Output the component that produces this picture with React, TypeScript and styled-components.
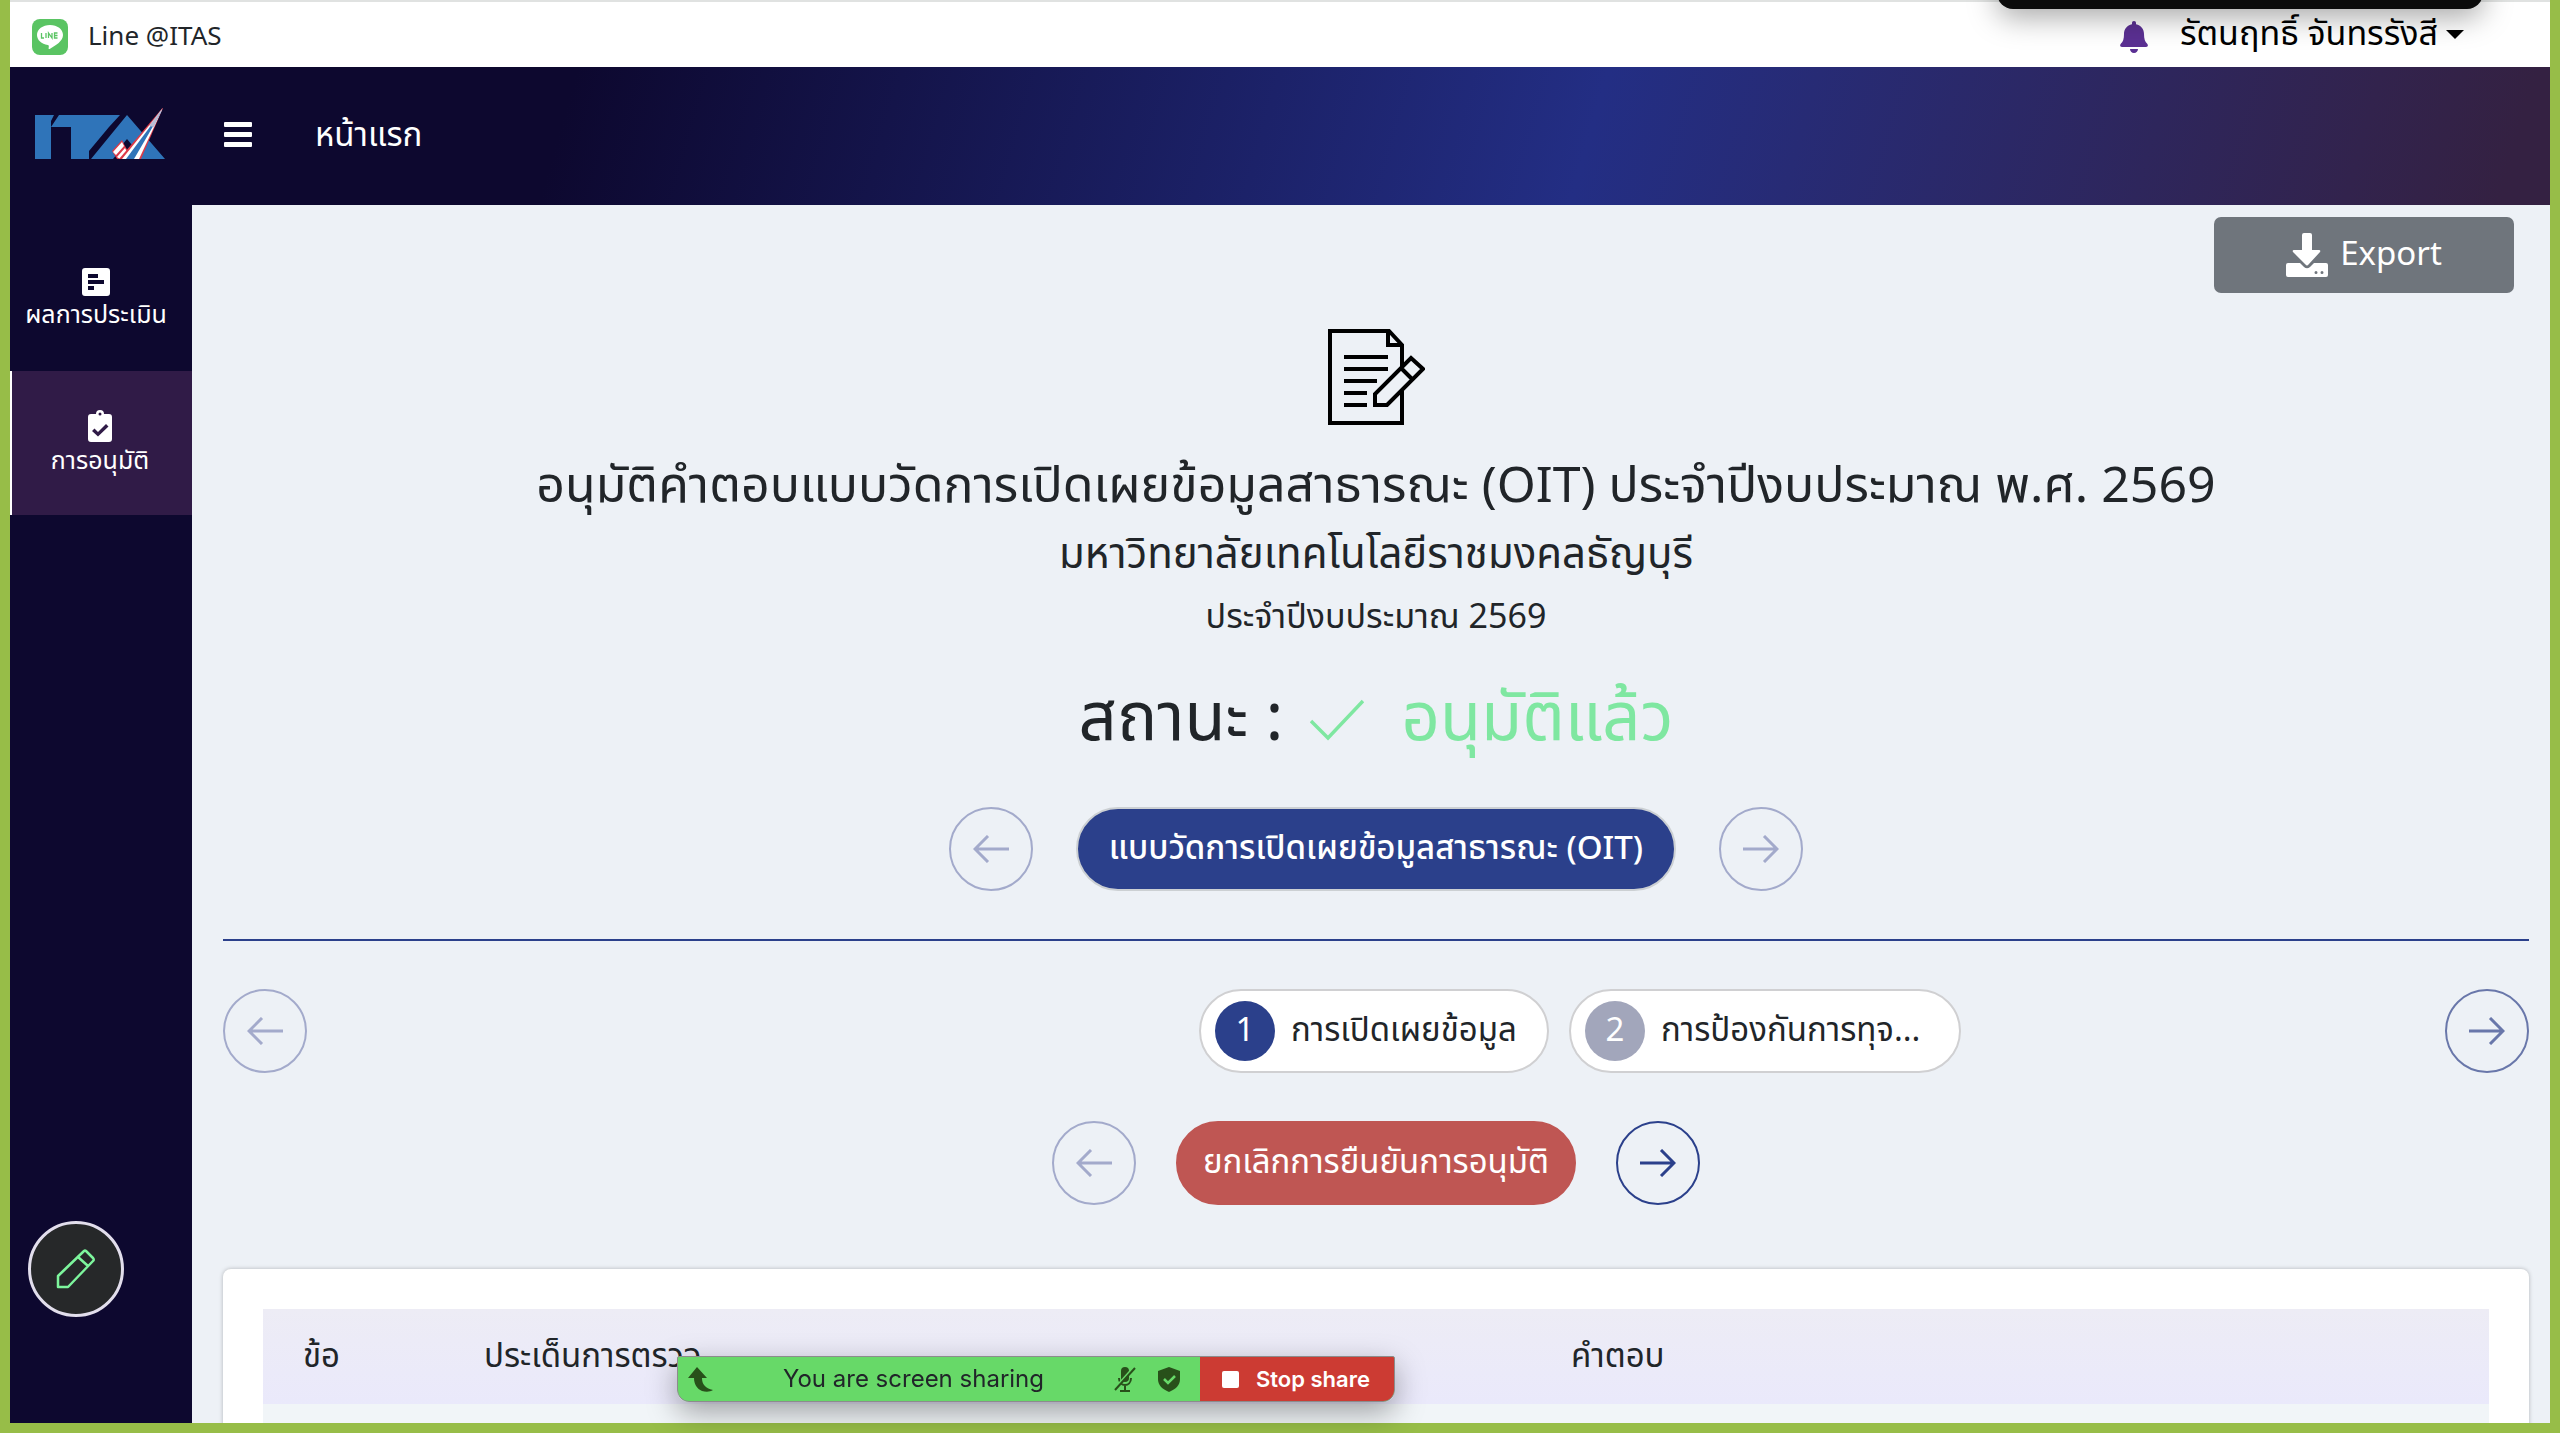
import React from "react";
import styled, { createGlobalStyle } from "styled-components";

const c = {
  frame: "#97bd48",
  navy: "#0d082f",
  active: "#301b47",
  page: "#edf1f6",
  blue: "#2b408b",
  text: "#212529",
  green: "#7fe7a1",
  red: "#bf5653",
};

const Global = createGlobalStyle`
  *, *::before, *::after { box-sizing: border-box; }
  body {
    margin: 0;
    background: ${c.page};
    color: ${c.text};
    font-family: "Noto Sans Thai", "Noto Sans", sans-serif;
    font-size: 33px;
    line-height: 40px;
  }
  button { font: inherit; color: inherit; padding: 0; border: 0; background: none; cursor: pointer; }
  a { color: inherit; text-decoration: none; }
  h1, h2, h3, p { margin: 0; font-weight: 400; }
  svg { display: block; flex: none; }
`;

const Frame = styled.div`
  height: 100vh;
  overflow: hidden;
  display: flex;
  flex-direction: column;
  border: 10px solid ${c.frame};
  border-top: 0;
`;

const TopBar = styled.div`
  flex: none;
  display: flex;
  align-items: center;
  justify-content: space-between;
  height: 67px;
  padding: 4px 86px 0 22px;
  background: #fff;
  border-top: 2px solid #e0e2e1;
`;

const LineLink = styled.a`
  display: flex;
  align-items: center;
  gap: 20px;
  font-size: 26px;
`;

const TopActions = styled.div`
  display: flex;
  align-items: center;
  gap: 32px;
  color: #000;
`;

const IconButton = styled.button`
  display: flex;
  color: #5b3093;
`;

const UserButton = styled.button`
  display: flex;
  align-items: center;
  gap: 8px;
  padding-bottom: 4px;
  font-size: 34px;
`;

const Caret = styled.span`
  border: 9px solid transparent;
  border-top-color: currentColor;
  border-bottom: 0;
`;

const Header = styled.header`
  flex: none;
  display: flex;
  align-items: center;
  height: 138px;
  padding: 0 0 4px 24px;
  color: #fff;
  background: linear-gradient(106deg, ${c.navy} 22%, #232e84 62%, #32234d 92%, #342142 98%);
`;

const HomeLink = styled.a`
  padding-top: 4px;
`;

const Menu = styled.button`
  display: grid;
  gap: 5px;
  width: 28px;
  margin: 0 63px 0 58px;
  span { height: 5px; border-radius: 1px; background: #fff; }
`;

const Body = styled.div`
  flex: 1;
  min-height: 0;
  display: flex;
`;

const Sidebar = styled.nav`
  flex: none;
  width: 182px;
  padding-top: 22px;
  background: ${c.navy};
  color: #fff;
`;

const SideLink = styled.a<{ $active?: boolean }>`
  display: flex;
  flex-direction: column;
  align-items: center;
  justify-content: center;
  gap: 4px;
  height: 144px;
  padding-right: ${(p) => (p.$active ? 4 : 10)}px;
  font-size: 25px;
  line-height: 30px;
  background: ${(p) => (p.$active ? c.active : "transparent")};
  border-left: ${(p) => (p.$active ? "2px solid #fff" : "0")};
`;

const Main = styled.main`
  flex: 1;
  min-width: 0;
  padding: 12px 21px 0 31px;
`;

const ExportRow = styled.div`
  display: flex;
  justify-content: flex-end;
  padding-right: 15px;
`;

const ExportButton = styled.button`
  display: flex;
  align-items: center;
  justify-content: center;
  gap: 12px;
  width: 300px;
  height: 76px;
  border-radius: 7px;
  background: #6f757c;
  color: #fff;
`;

const Heading = styled.div`
  display: flex;
  flex-direction: column;
  align-items: center;
  padding-top: 36px;
  text-align: center;
  h1 { margin-top: 32px; font-size: 50px; line-height: 60px; }
  h2 { margin-top: 13px; font-size: 42px; line-height: 50px; }
  h3 { margin-top: 18px; font-size: 34px; line-height: 40px; }
`;

const Status = styled.p`
  display: flex;
  align-items: center;
  gap: 26px;
  margin-top: 42px;
  font-size: 67px;
  line-height: 80px;
  strong { display: flex; align-items: center; gap: 38px; font-weight: 400; color: ${c.green}; }
`;

const Pager = styled.div<{ $gap: number; $top: number }>`
  display: flex;
  justify-content: center;
  align-items: center;
  gap: ${(p) => p.$gap}px;
  margin-top: ${(p) => p.$top}px;
`;

const Round = styled.button<{ $tone: string }>`
  flex: none;
  display: grid;
  place-items: center;
  width: 84px;
  height: 84px;
  border: 2px solid currentColor;
  border-radius: 50%;
  color: ${(p) => p.$tone};
`;

const Pill = styled.button<{ $fill: string; $line: string; $width: number; $strong?: boolean }>`
  width: ${(p) => p.$width}px;
  height: 84px;
  border: 2px solid ${(p) => p.$line};
  border-radius: 42px;
  background: ${(p) => p.$fill};
  color: #fff;
  font-weight: ${(p) => (p.$strong ? 500 : 400)};
  white-space: nowrap;
`;

const Rule = styled.hr`
  height: 2px;
  margin: 48px 0;
  border: 0;
  background: ${c.blue};
`;

const Steps = styled.div`
  display: flex;
  align-items: center;
`;

const StepList = styled.div`
  flex: 1;
  display: flex;
  justify-content: center;
  gap: 20px;
  padding-left: 408px;
`;

const Step = styled.button<{ $width: number }>`
  display: flex;
  align-items: center;
  gap: 16px;
  width: ${(p) => p.$width}px;
  height: 84px;
  padding: 0 14px;
  border: 2px solid #d0d0d2;
  border-radius: 42px;
  background: #fff;
  white-space: nowrap;
`;

const StepNumber = styled.span<{ $on?: boolean }>`
  display: grid;
  place-items: center;
  width: 60px;
  height: 60px;
  border-radius: 50%;
  background: ${(p) => (p.$on ? c.blue : "#a2a6bb")};
  color: #fff;
`;

const Card = styled.section`
  margin-top: 64px;
  padding: 40px;
  background: #fff;
  border-radius: 8px;
  box-shadow: 0 0 4px rgba(0, 0, 0, 0.25);
`;

const Table = styled.table`
  width: 100%;
  border-collapse: collapse;
  table-layout: fixed;
  th {
    height: 95px;
    padding: 0 40px;
    text-align: left;
    font-weight: 400;
  }
  thead { background: linear-gradient(#edecf5, #eae9fb); }
  td { height: 95px; background: #f1f5f8; }
`;

const Fab = styled.button`
  position: fixed;
  left: 28px;
  bottom: 116px;
  display: grid;
  place-items: center;
  width: 96px;
  height: 96px;
  border: 3px solid #e2deec;
  border-radius: 50%;
  background: #262829;
`;

const CameraTab = styled.div`
  position: fixed;
  top: -31px;
  right: 77px;
  width: 486px;
  height: 40px;
  border-radius: 16px;
  background: #0b0b0b;
  box-shadow: 0 8px 30px rgba(0, 0, 0, 0.35);
`;

const ShareShadow = styled.div`
  position: fixed;
  left: 677px;
  bottom: 31px;
  border-radius: 2px 2px 12px 12px;
  box-shadow: 0 10px 30px rgba(0, 0, 0, 0.35);
`;

const ShareBar = styled.div`
  display: flex;
  width: 718px;
  height: 46px;
  overflow: hidden;
  border: 1px solid #8c8c8c;
  border-radius: 2px 2px 12px 12px;
  font-family: Inter, sans-serif;
  font-size: 24px;
  background: #67d968;
`;

const ShareInfo = styled.div`
  flex: 1;
  display: flex;
  align-items: center;
  padding: 0 20px 0 10px;
  span { flex: 1; text-align: center; }
`;

const ShareIcons = styled.div`
  display: flex;
  gap: 22px;
`;

const StopButton = styled.button`
  display: flex;
  align-items: center;
  gap: 17px;
  width: 194px;
  padding-left: 22px;
  background: #cc3b33;
  color: #fff;
  font-size: 22px;
  font-weight: 600;
  i { width: 17px; height: 17px; border-radius: 2px; background: #fff; }
`;

const LineLogo = () => (
  <svg width="36" height="36" viewBox="0 0 36 36">
    <rect width="36" height="36" rx="8" fill="#5ac463" />
    <path d="M18 6C10.800 6 5 10.300 5 16c0 5 4.600 9.200 10.800 10 .9.200 1.100.6 1 1.400l-.2 2c0 .7.400.9 1.100.5C24 26.500 31 21.900 31 16 31 10.300 25.200 6 18 6Z" fill="#fff" />
    <path d="M9.500 14v5h2.500M14 14v5M16.500 19v-5l3.500 5v-5M25.500 14h-3v5h3M22.500 16.500h3" fill="none" stroke="#5ac463" strokeWidth="1.300" />
  </svg>
);

const ItaLogo = () => (
  <svg width="132" height="52" viewBox="0 0 132 52" role="img" aria-label="ITA">
    <g fill="#2f74b9">
      <path d="M1 7h19l-3 6v38H1Z" />
      <path d="M25 7h61L75 19 55 43v8H37V19H17Z" />
      <path d="M93 7l38 44h-27L93 32l-5 8-9 11H57Z" />
    </g>
    <path d="M93 31l5 6-5 5-5-5Z" fill={c.navy} />
    <path d="M78 43l10-11 3 6 4 7-6 6h-6Z" fill="#dc3a48" />
    <path d="M79 44l9-10 2 4-8 9ZM83 49l8-9 2 4-7 7Z" fill="#fff" />
    <path d="M128.500 0L85 51h22L129 0Z" fill="#dc3a48" />
    <path d="M128.500 1L88 51h17Z" fill="#fff" />
    <path d="M128.500 2L92 51h8Z" fill="#2f74b9" />
    <path d="M128.500 0L115 18l5 1Z" fill="#b9bdd6" />
  </svg>
);

const Bell = () => (
  <svg width="28" height="32" viewBox="0 0 28 32" fill="currentColor">
    <path d="M14 0c1.300 0 2 .9 2 2.200v1C21 4.300 24 8 24 13c0 5 1 7.500 3 9.500 1.500 1.500 1 3.500-1 3.500H2c-2 0-2.500-2-1-3.500C3 20.500 4 18 4 13 4 8 7 4.300 12 3.200v-1C12 .9 12.700 0 14 0ZM10 28h8c0 2.300-1.600 4-4 4s-4-1.700-4-4Z" />
  </svg>
);

const ResultIcon = () => (
  <svg width="28" height="28" viewBox="0 0 28 28" fill="currentColor" fillRule="evenodd">
    <path d="M3 0h22a3 3 0 0 1 3 3v22a3 3 0 0 1-3 3H3a3 3 0 0 1-3-3V3a3 3 0 0 1 3-3Zm3 6v4h10V6Zm0 6v4h16v-4Zm0 6v4h6v-4Z" />
  </svg>
);

const ApproveIcon = () => (
  <svg width="24" height="32" viewBox="0 0 24 32" fill="currentColor" fillRule="evenodd">
    <path d="M3 4h5a4 4 0 0 1 8 0h5a3 3 0 0 1 3 3v22a3 3 0 0 1-3 3H3a3 3 0 0 1-3-3V7a3 3 0 0 1 3-3Zm9-1.500a1.500 1.500 0 1 0 0 3 1.500 1.500 0 0 0 0-3ZM18 14l-8 8-3.500-3.500L4 21l6 5.500L20.500 16.500Z" />
  </svg>
);

const ExportIcon = () => (
  <svg width="42" height="44" viewBox="0 0 42 44" fill="currentColor" fillRule="evenodd">
    <path d="M18 0h6q2 0 2 2v15h7q2 0 1 2L22.500 31.500q-1.500 2-3 0L7 19q-1-2 1-2h8V2q0-2 2-2Z" />
    <path d="M2 30h12l4 4q3 2.500 6 0l4-4h12q2 0 2 2v10q0 2-2 2H2q-2 0-2-2V32q0-2 2-2Zm28 8a1.500 1.500 0 1 0 0 3 1.500 1.500 0 0 0 0-3Zm6 0a1.500 1.500 0 1 0 0 3 1.500 1.500 0 0 0 0-3Z" />
  </svg>
);

const DocumentIcon = () => (
  <svg width="98" height="96" viewBox="0 0 98 96" fill="none" stroke="#000" strokeWidth="4">
    <path d="M75 38V16L62 2H3v92h72V62M61 2v14h14M17 28h44M17 40h44M17 52h33M17 64h23M17 76h23" />
    <path d="M84 29l12 11-36 36H48V65ZM74 39l11 11" />
  </svg>
);

const CheckIcon = () => (
  <svg width="54" height="42" viewBox="0 0 54 42" fill="none" stroke="currentColor" strokeWidth="3.500">
    <path d="M1 22l17 17L53 2" />
  </svg>
);

const Arrow = ({ left }: { left?: boolean }) => (
  <svg width="36" height="28" viewBox="0 0 36 28" fill="none" stroke="currentColor" strokeWidth="3">
    <path d={left ? "M36 14H2M15 1L2 14l13 13" : "M0 14h34M21 1l13 13-13 13"} />
  </svg>
);

const PencilIcon = () => (
  <svg width="40" height="40" viewBox="0 0 40 40" fill="none" stroke="#7df59c" strokeWidth="2.500" strokeLinejoin="round">
    <path d="M2 27L28 2q1-1 2 0l7 7q1.500 2 0 3L12 38H2ZM22 8l10 9" />
  </svg>
);

const ShareArrow = () => (
  <svg width="25" height="25" viewBox="0 0 25 25" fill="#28501a">
    <path d="M9 0l10 11h-5c0 6 3 10 11 12-3 2-7 2-11 1-5-2-8-7-8-13H0Z" />
  </svg>
);

const MicOff = () => (
  <svg width="22" height="25" viewBox="0 0 22 25" fill="none" stroke="#28501a" strokeWidth="2">
    <rect x="7" y="0" width="8" height="15" rx="4" fill="#28501a" stroke="none" />
    <path d="M5 11c0 5 3 7 6 7s6-2 6-7M11 18v6M6 24h10" />
    <path d="M19 1L-1 23" stroke="#67d968" />
    <path d="M21 1L1 23" />
  </svg>
);

const Shield = () => (
  <svg width="22" height="25" viewBox="0 0 22 25">
    <path d="M11 0l11 4v8c0 6-4 10-11 13C4 22 0 18 0 12V4Z" fill="#28501a" />
    <path d="M6 12l4 4 7-7" fill="none" stroke="#67d968" strokeWidth="2.500" />
  </svg>
);

const faded = "#a3aacb";

export default function App() {
  return (
    <>
      <Global />
      <Frame>
        <TopBar>
          <LineLink href="#line"><LineLogo />Line @ITAS</LineLink>
          <TopActions>
            <IconButton aria-label="การแจ้งเตือน"><Bell /></IconButton>
            <UserButton>รัตนฤทธิ์ จันทรรังสี<Caret /></UserButton>
          </TopActions>
        </TopBar>
        <Header>
          <ItaLogo />
          <Menu aria-label="เมนู"><span /><span /><span /></Menu>
          <HomeLink href="#home">หน้าแรก</HomeLink>
        </Header>
        <Body>
          <Sidebar>
            <SideLink href="#results"><ResultIcon />ผลการประเมิน</SideLink>
            <SideLink href="#approve" $active><ApproveIcon />การอนุมัติ</SideLink>
          </Sidebar>
          <Main>
            <ExportRow>
              <ExportButton><ExportIcon />Export</ExportButton>
            </ExportRow>
            <Heading>
              <DocumentIcon />
              <h1>อนุมัติคำตอบแบบวัดการเปิดเผยข้อมูลสาธารณะ (OIT) ประจำปีงบประมาณ พ.ศ. 2569</h1>
              <h2>มหาวิทยาลัยเทคโนโลยีราชมงคลธัญบุรี</h2>
              <h3>ประจำปีงบประมาณ 2569</h3>
              <Status>สถานะ : <strong><CheckIcon />อนุมัติแล้ว</strong></Status>
            </Heading>
            <Pager $gap={43} $top={47}>
              <Round $tone={faded} aria-label="แบบวัดก่อนหน้า"><Arrow left /></Round>
              <Pill $fill={c.blue} $line="#ccd0d3" $width={600} $strong>แบบวัดการเปิดเผยข้อมูลสาธารณะ (OIT)</Pill>
              <Round $tone={faded} aria-label="แบบวัดถัดไป"><Arrow /></Round>
            </Pager>
            <Rule />
            <Steps>
              <Round $tone={faded} aria-label="ขั้นก่อนหน้า"><Arrow left /></Round>
              <StepList>
                <Step $width={350}><StepNumber $on>1</StepNumber>การเปิดเผยข้อมูล</Step>
                <Step $width={392}><StepNumber>2</StepNumber>การป้องกันการทุจ...</Step>
              </StepList>
              <Round $tone="#6977aa" aria-label="ขั้นถัดไป"><Arrow /></Round>
            </Steps>
            <Pager $gap={40} $top={48}>
              <Round $tone={faded} aria-label="ข้อก่อนหน้า"><Arrow left /></Round>
              <Pill $fill={c.red} $line={c.red} $width={400}>ยกเลิกการยืนยันการอนุมัติ</Pill>
              <Round $tone={c.blue} aria-label="ข้อถัดไป"><Arrow /></Round>
            </Pager>
            <Card>
              <Table>
                <colgroup><col width="181" /><col width="1087" /><col /></colgroup>
                <thead>
                  <tr><th>ข้อ</th><th>ประเด็นการตรวจ</th><th>คำตอบ</th></tr>
                </thead>
                <tbody>
                  <tr><td /><td /><td /></tr>
                </tbody>
              </Table>
            </Card>
          </Main>
        </Body>
      </Frame>
      <CameraTab />
      <Fab aria-label="แก้ไข"><PencilIcon /></Fab>
      <ShareShadow>
        <ShareBar>
          <ShareInfo>
            <ShareArrow />
            <span>You are screen sharing</span>
            <ShareIcons><MicOff /><Shield /></ShareIcons>
          </ShareInfo>
          <StopButton><i />Stop share</StopButton>
        </ShareBar>
      </ShareShadow>
    </>
  );
}
